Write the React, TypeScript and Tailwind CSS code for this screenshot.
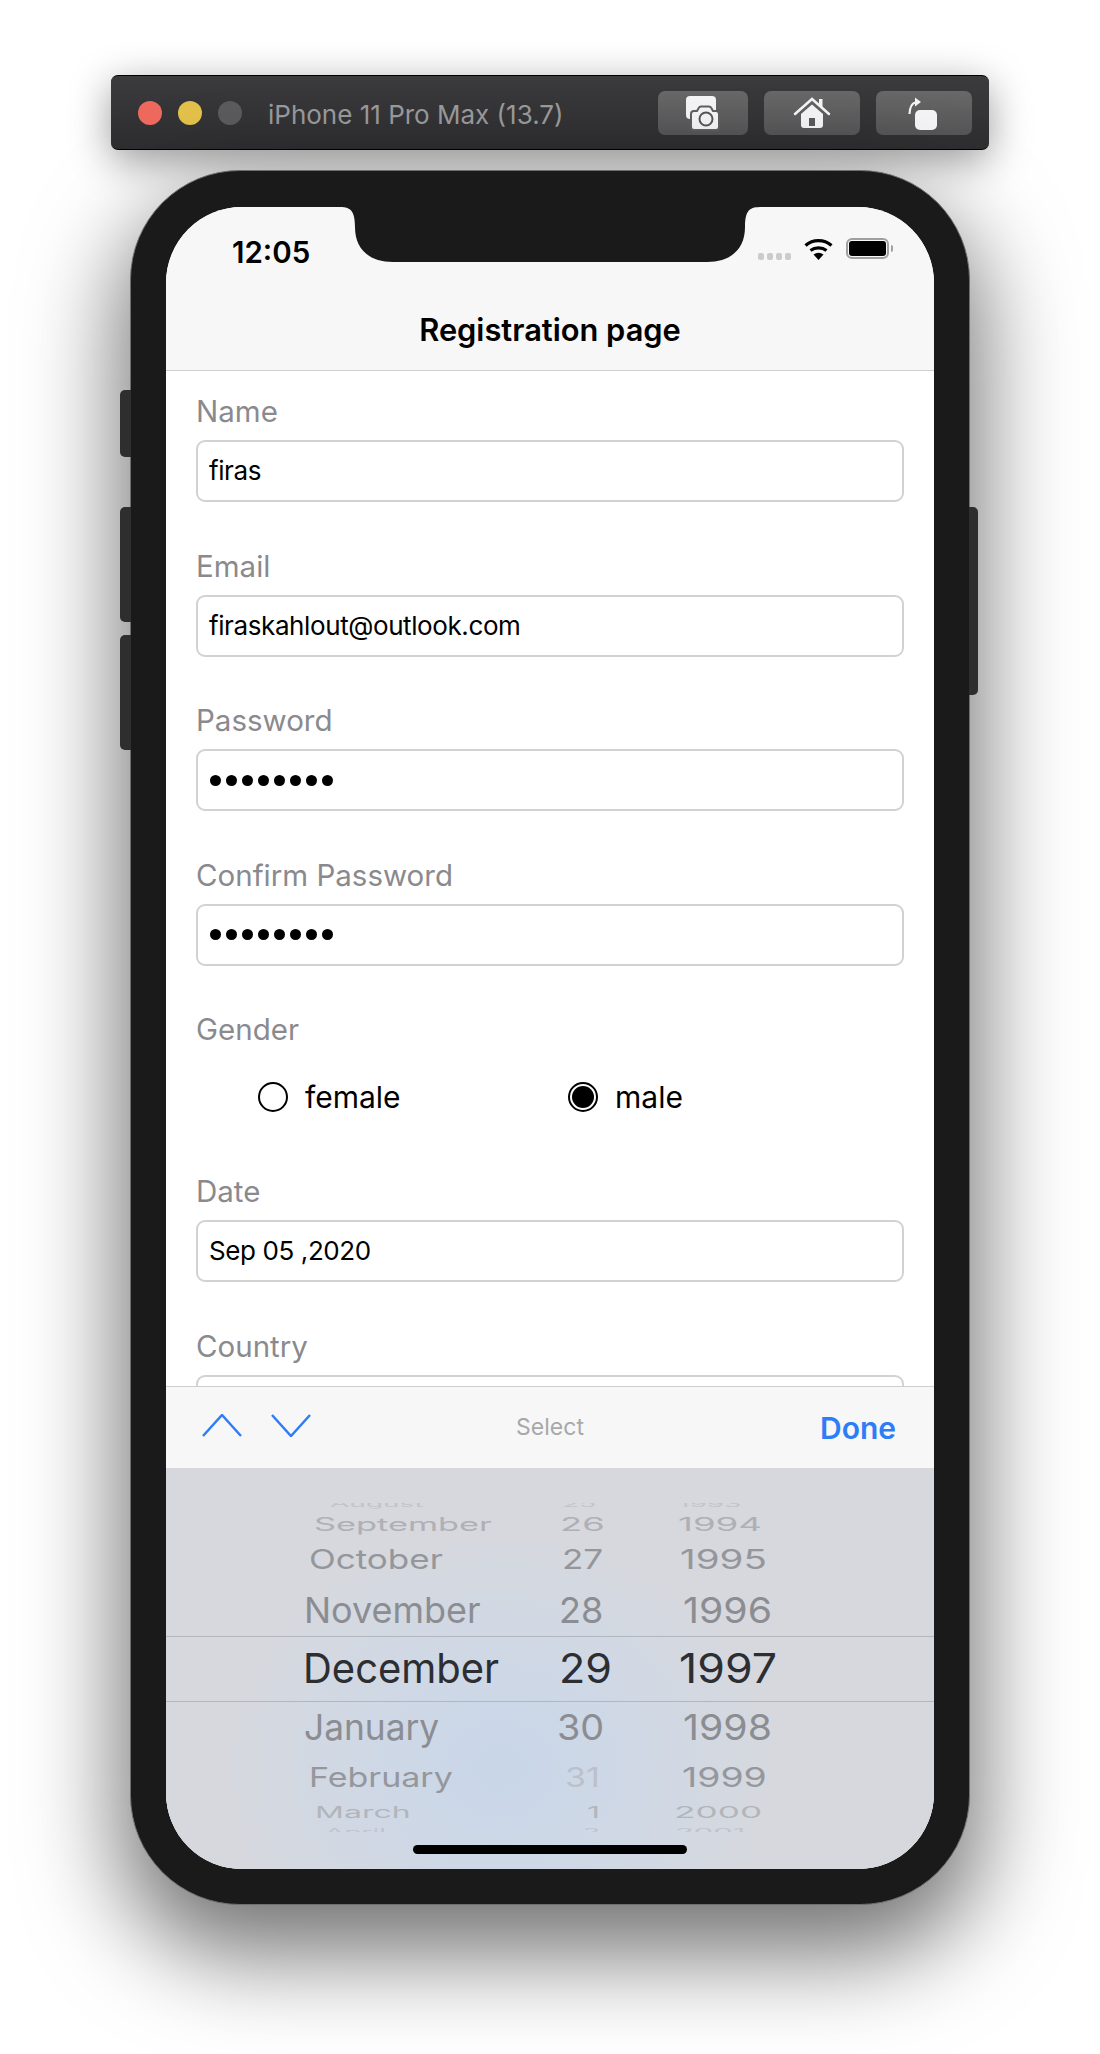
import React from "react";

const labelCls = "h-[44px] flex items-center text-[29.5px] leading-none text-[#8a8a8e]";
const inputCls = "h-[62px] mt-[6px] flex items-center rounded-[9px] border-2 border-[#d2d2d2] pl-[11px] text-[26px] tracking-[-0.4px] leading-none text-black";

function Field({ label, children }: { label: string; children: React.ReactNode }) {
  return (
    <div>
      <div className={labelCls}>{label}</div>
      <div className={inputCls}>{children}</div>
    </div>
  );
}

function Dots() {
  return (
    <div className="flex gap-[5px] ml-[1px]" aria-label="password">
      {Array.from({ length: 8 }).map((_, i) => (
        <span key={i} className="block w-[11px] h-[11px] rounded-full bg-black" />
      ))}
    </div>
  );
}

const Btn = ({ w, children }: { w: string; children: React.ReactNode }) => (
  <div className={`${w} h-[44px] rounded-[7px] bg-gradient-to-b from-[#686868] to-[#555557] flex items-center justify-center`}>{children}</div>
);

function Picker() {
  const base = "inline-block whitespace-nowrap leading-none origin-left";
  return (
    <div className="relative h-[401px] bg-[#d6d8de] bg-[radial-gradient(ellipse_270px_230px_at_334px_300px,#c8d6e9_0%,#d0d8e5_55%,#d6d8de_100%)] pt-[35px]">
      <div className="h-[329px] overflow-hidden font-['Inter',sans-serif]">
        <div className="-mt-[9px]">
          {/* August */}
          <div className="flex h-[20px] items-center text-[#c2c4c9] text-[28px]">
            <div className="w-[374px] pl-[164px]"><span className={`${base} scale-y-[0.3]`}>August</span></div>
            <div className="w-[120px] pl-[22px]"><span className={`${base} scale-y-[0.3]`}>25</span></div>
            <div className="pl-[18px]"><span className={`${base} scale-y-[0.3]`}>1993</span></div>
          </div>
          {/* September */}
          <div className="flex h-[22px] items-center text-[#aeb0b5] text-[33px]">
            <div className="w-[374px] pl-[148px]"><span className={`${base} scale-y-[0.55] scale-x-[1.04]`}>September</span></div>
            <div className="w-[120px] pl-[20px]"><span className={`${base} scale-y-[0.55] scale-x-[1.1]`}>26</span></div>
            <div className="pl-[18px]"><span className={`${base} scale-y-[0.55] scale-x-[1.11]`}>1994</span></div>
          </div>
          {/* October */}
          <div className="flex h-[47px] items-center text-[#94969b] text-[35px]">
            <div className="w-[374px] pl-[143px]"><span className={`${base} scale-y-[0.78]`}>October</span></div>
            <div className="w-[120px] pl-[22px]"><span className={`${base} scale-y-[0.78]`}>27</span></div>
            <div className="pl-[20px]"><span className={`${base} scale-y-[0.78] scale-x-[1.1]`}>1995</span></div>
          </div>
          {/* November */}
          <div className="flex h-[53px] items-center text-[#8b8d92] text-[36px]">
            <div className="w-[374px] pl-[138px]"><span className={base}>November</span></div>
            <div className="w-[120px] pl-[19px]"><span className={base}>28</span></div>
            <div className="pl-[23px]"><span className={`${base} scale-x-[1.09]`}>1996</span></div>
          </div>
          {/* December */}
          <div className="flex h-[66px] items-center border-y border-[#b3b6bd] text-[#2c2e32] text-[41px]">
            <div className="w-[374px] pl-[137px]"><span className={`${base} scale-x-[0.975]`}>December</span></div>
            <div className="w-[120px] pl-[19px]"><span className={`${base} scale-x-[1.05]`}>29</span></div>
            <div className="pl-[19px]"><span className={`${base} scale-x-[1.09]`}>1997</span></div>
          </div>
          {/* January */}
          <div className="flex h-[49px] items-center text-[#8b8d92] text-[36px]">
            <div className="w-[374px] pl-[138px]"><span className={`${base} scale-x-[0.98]`}>January</span></div>
            <div className="w-[120px] pl-[17px]"><span className={`${base} scale-x-[1.05]`}>30</span></div>
            <div className="pl-[23px]"><span className={`${base} scale-x-[1.09]`}>1998</span></div>
          </div>
          {/* February */}
          <div className="flex h-[51px] items-center text-[#95979c] text-[34px]">
            <div className="w-[374px] pl-[143px]"><span className={`${base} scale-y-[0.8]`}>February</span></div>
            <div className="w-[120px] pl-[25px]"><span className={`${base} scale-y-[0.8] text-[#bcc0c9]`}>31</span></div>
            <div className="pl-[22px]"><span className={`${base} scale-y-[0.8] scale-x-[1.1]`}>1999</span></div>
          </div>
          {/* March */}
          <div className="flex h-[19px] items-center text-[#b3b5ba] text-[32px]">
            <div className="w-[374px] pl-[149px]"><span className={`${base} scale-y-[0.5]`}>March</span></div>
            <div className="w-[120px] pl-[47px]"><span className={`${base} scale-y-[0.5]`}>1</span></div>
            <div className="pl-[14px]"><span className={`${base} scale-y-[0.5] scale-x-[1.1]`}>2000</span></div>
          </div>
          {/* April */}
          <div className="flex h-[21px] items-center text-[#c2c4c9] text-[28px]">
            <div className="w-[374px] pl-[159px]"><span className={`${base} scale-y-[0.3]`}>April</span></div>
            <div className="w-[120px] pl-[43px]"><span className={`${base} scale-y-[0.3]`}>2</span></div>
            <div className="pl-[15px]"><span className={`${base} scale-y-[0.3] scale-x-[1.1]`}>2001</span></div>
          </div>
        </div>
      </div>
      <div className="absolute bottom-[15px] left-[247px] w-[274px] h-[9px] rounded-full bg-black" />
    </div>
  );
}

export default function App() {
  return (
    <div className="w-[1100px] h-[2054px] bg-white overflow-hidden flex flex-col items-center pt-[75px] font-['Inter',sans-serif]">
      {/* Simulator toolbar */}
      <div className="w-[878px] h-[75px] shrink-0 rounded-[7px] border-y border-black bg-gradient-to-b from-[#3b3b3d] to-[#2e2e30] shadow-[0_10px_40px_rgba(0,0,0,0.4)] flex items-center pl-[27px] pr-[17px]">
        <span className="w-[24px] h-[24px] rounded-full bg-[#ee6a5f]" />
        <span className="w-[24px] h-[24px] rounded-full bg-[#e3c14a] ml-[16px]" />
        <span className="w-[24px] h-[24px] rounded-full bg-[#5b5b5d] ml-[16px]" />
        <span className="ml-[26px] mt-[4px] text-[26px] leading-none text-[#9a9a9c] whitespace-nowrap">iPhone 11 Pro Max (13.7)</span>
        <div className="ml-auto flex gap-[16px] mt-[1px]">
          <Btn w="w-[90px]">
            <svg width="38" height="38" viewBox="0 0 38 38">
              <rect x="2" y="2" width="30" height="23" rx="4" fill="#f4f4f6" />
              <path d="M11 17h2l2-3.5q.5-1 2-1h8q1.500 0 2 1l2 3.500h3q3 0 3 3v13q0 3-3 3h-22q-3 0-3-3v-13q0-3 3-3z" fill="#f4f4f6" stroke="#5f5f60" strokeWidth="2" />
              <circle cx="22" cy="25" r="6.500" fill="#f4f4f6" stroke="#555" strokeWidth="2" />
            </svg>
          </Btn>
          <Btn w="w-[96px]">
            <svg width="38" height="34" viewBox="0 0 38 34">
              <path d="M2 18 19 3l17 15" fill="none" stroke="#f4f4f6" strokeWidth="2.500" strokeLinecap="round" />
              <rect x="26" y="3" width="3.500" height="8" fill="#f4f4f6" />
              <path d="M8 18 19 8.500 30 18v11q0 3-3 3H11q-3 0-3-3z" fill="#f4f4f6" />
              <rect x="16" y="22" width="6" height="8" fill="#5a5a5b" />
            </svg>
          </Btn>
          <Btn w="w-[96px]">
            <svg width="32" height="34" viewBox="0 0 32 34">
              <rect x="7" y="14" width="22" height="20" rx="5" fill="#f4f4f6" />
              <path d="M1.500 18Q2 8 7 6.500" fill="none" stroke="#f4f4f6" strokeWidth="2.200" />
              <path d="M7 1.500 13 6l-6 4.500z" fill="#f4f4f6" />
            </svg>
          </Btn>
        </div>
      </div>

      {/* Phone */}
      <div className="relative mt-[20px] w-[840px] h-[1735px] shrink-0 rounded-[110px] bg-[#1a1a1a] border border-[#6f6f6f] px-[35px] pt-[36px] pb-[35px] shadow-[0_40px_95px_10px_rgba(0,0,0,0.55)]">
        {/* Side buttons */}
        <span className="absolute -left-[11px] top-[219px] w-[11px] h-[67px] rounded-l-[5px] bg-[#2e2e2e]" />
        <span className="absolute -left-[11px] top-[336px] w-[11px] h-[115px] rounded-l-[5px] bg-[#2e2e2e]" />
        <span className="absolute -left-[11px] top-[464px] w-[11px] h-[115px] rounded-l-[5px] bg-[#2e2e2e]" />
        <span className="absolute -right-[9px] top-[336px] w-[9px] h-[188px] rounded-r-[5px] bg-[#2e2e2e]" />

        {/* Screen */}
        <div className="relative w-[768px] h-[1662px] rounded-[76px] overflow-hidden bg-white flex flex-col">
          <div className="h-[164px] shrink-0 bg-[#f7f7f8] border-b border-[#cfcfd2] relative">
            <span className="absolute left-[66px] top-[27px] text-[29.500px] leading-[36px] font-semibold text-black">12:05</span>
            {/* Signal */}
            <div className="absolute left-[592px] top-[46px] flex gap-[3px]">
              {[0, 1, 2, 3].map((i) => (
                <span key={i} className="w-[6px] h-[7px] rounded-[2px] bg-[#cbcbcb]" />
              ))}
            </div>
            {/* Wifi */}
            <svg className="absolute left-[638px] top-[31px]" width="29" height="22" viewBox="0 0 29 22">
              <path d="M1.500 7.500C9 1 20 1 27.500 7.500" fill="none" stroke="#000" strokeWidth="3.200" />
              <path d="M6.500 12.500C11 9 18 9 22.500 12.500" fill="none" stroke="#000" strokeWidth="3.200" />
              <path d="M9.500 16.500Q14.500 13 19.500 16.500L14.500 22z" fill="#000" />
            </svg>
            {/* Battery */}
            <div className="absolute left-[680px] top-[31px] flex items-center">
              <div className="w-[43px] h-[21px] rounded-[6px] border-2 border-[#a0a0a0] p-[1px]">
                <div className="w-full h-full rounded-[3px] bg-black" />
              </div>
              <span className="ml-[2px] w-[2px] h-[7px] rounded-r-[2px] bg-[#a0a0a0]" />
            </div>
            <div className="absolute inset-x-0 bottom-[20px] text-center text-[30.800px] leading-[40px] font-semibold text-black">Registration page</div>
          </div>

          {/* Form */}
          <div className="flex-1 min-h-0 overflow-hidden px-[30px] pt-[19px] flex flex-col gap-[42.500px] bg-white">
            <Field label="Name">firas</Field>
            <Field label="Email">firaskahlout@outlook.com</Field>
            <Field label="Password"><Dots /></Field>
            <Field label="Confirm Password"><Dots /></Field>
            <div>
              <div className={labelCls}>Gender</div>
              <div className="h-[75.500px] pt-[13.500px] flex items-center text-[30px] leading-none text-black">
                <span className="ml-[62px] w-[30px] h-[30px] rounded-full border-[2.500px] border-black" />
                <span className="ml-[17px] w-[263px]">female</span>
                <span className="w-[30px] h-[30px] rounded-full border-[2.500px] border-black p-[2px]">
                  <span className="block w-full h-full rounded-full bg-black" />
                </span>
                <span className="ml-[17px]">male</span>
              </div>
            </div>
            <Field label="Date">Sep 05 ,2020</Field>
            <Field label="Country">{""}</Field>
          </div>

          {/* Accessory bar */}
          <div className="h-[82px] shrink-0 bg-[#f7f7f8] border-t border-[#cfcfd2] flex items-center pl-[36px] pr-[38px]">
            <svg width="40" height="23" viewBox="0 0 40 23" className="mb-[4px]">
              <path d="M1 22 20 1l19 21" fill="none" stroke="#2f7df6" strokeWidth="2.500" />
            </svg>
            <svg width="40" height="23" viewBox="0 0 40 23" className="ml-[29px] mb-[4px]">
              <path d="M1 1l19 21L39 1" fill="none" stroke="#2f7df6" strokeWidth="2.500" />
            </svg>
            <span className="absolute left-0 right-0 text-center text-[23px] leading-none text-[#a8a8aa]">Select</span>
            <span className="ml-auto text-[30px] leading-none font-semibold text-[#2f7df6]">Done</span>
          </div>

          <Picker />
        </div>

        {/* Notch */}
        <svg className="absolute left-[205px] top-[36px]" width="428" height="56" viewBox="0 0 428 56">
          <path d="M0 0C12 0 19 0 19 20C19 42 33 55 57 55H371C395 55 409 42 409 20C409 0 416 0 428 0Z" fill="#1a1a1a" />
        </svg>
      </div>
    </div>
  );
}
